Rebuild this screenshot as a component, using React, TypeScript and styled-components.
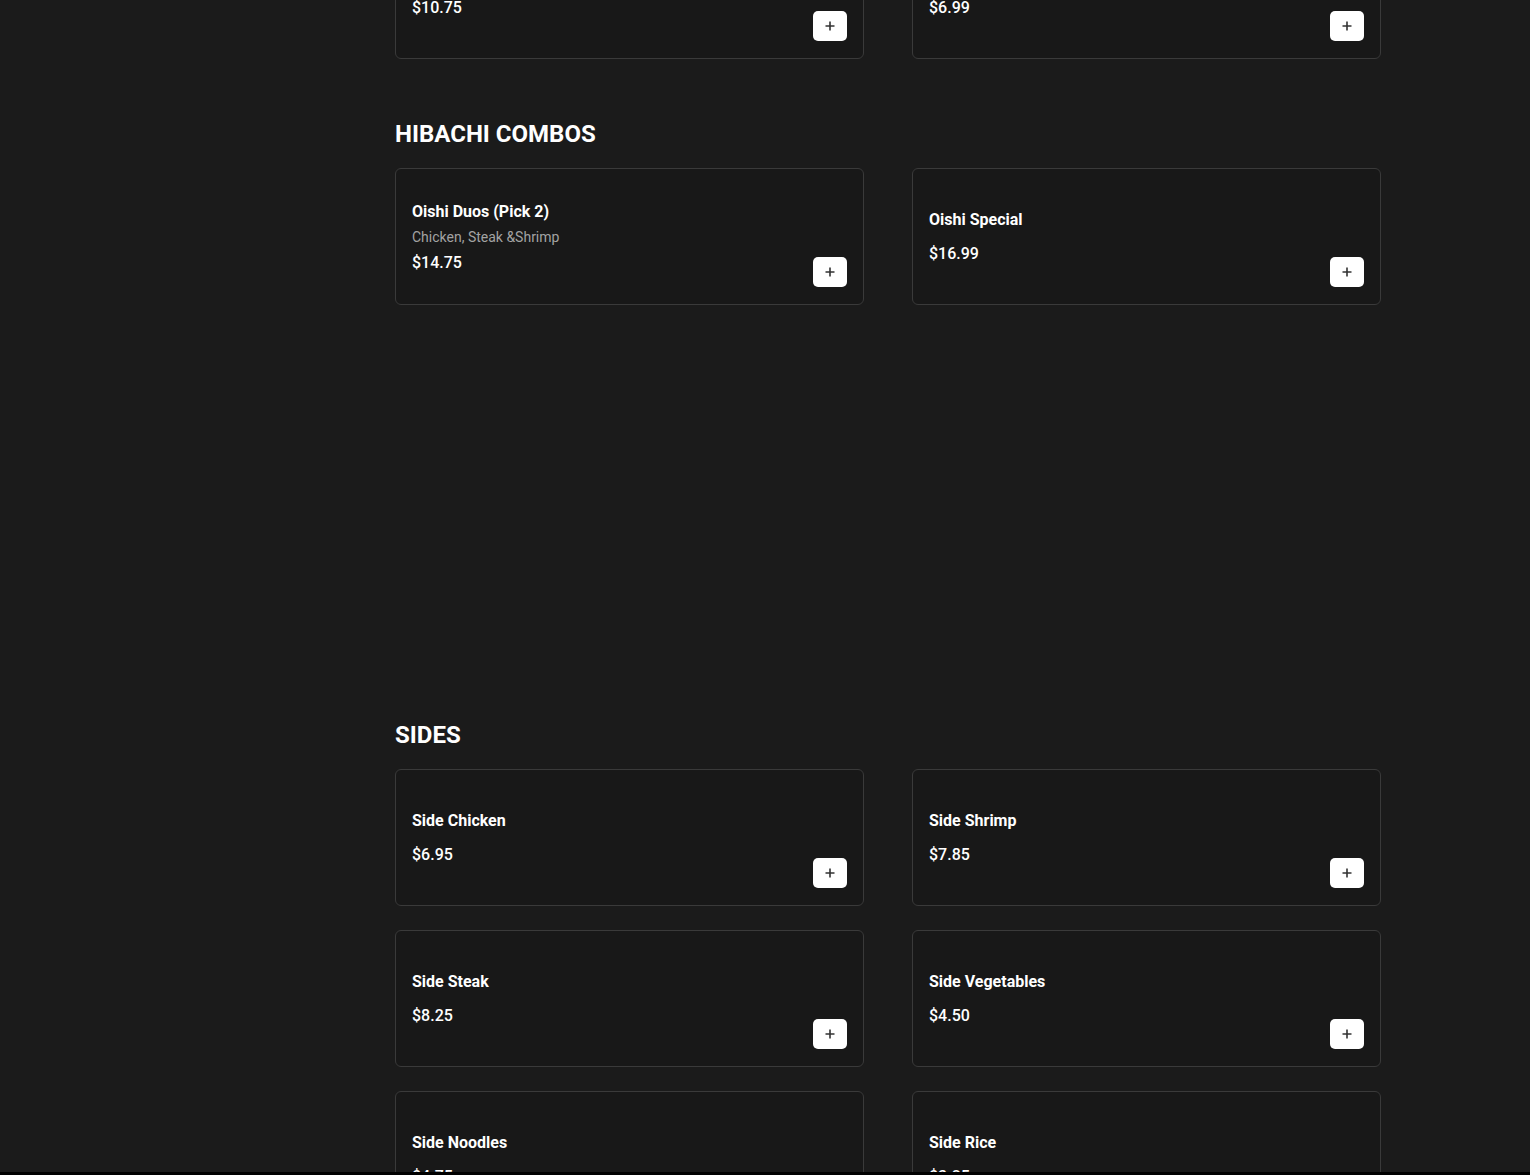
import React from "react";
import styled, { createGlobalStyle } from "styled-components";

const Global = createGlobalStyle`
  html, body { margin: 0; padding: 0; background: #000; }
  body { font-family: Roboto, "Liberation Sans", Arial, sans-serif; color: #fff; }
  * { box-sizing: border-box; }
`;

const Page = styled.div`
  height: 1172px;
  overflow: hidden;
  background: #1b1b1b;
`;

const Menu = styled.main`
  width: 986px;
  margin-left: 395px;
  margin-top: -78px;
  display: flex;
  flex-direction: column;
`;

const Section = styled.section<{ $after: number }>`
  display: flex;
  flex-direction: column;
  margin-bottom: ${(p) => p.$after}px;
`;

const Heading = styled.h2`
  margin: 0 0 19px;
  font-size: 24px;
  line-height: 29px;
  font-weight: 700;
  color: #fff;
`;

const Grid = styled.div`
  display: grid;
  grid-template-columns: 1fr 1fr;
  column-gap: 48px;
  row-gap: 24px;
`;

const Card = styled.article`
  height: 137px;
  background: #181818;
  border: 1px solid #3a3a3a;
  border-radius: 6px;
  padding: 16px;
  display: flex;
  align-items: stretch;
  justify-content: space-between;
`;

const Info = styled.div<{ $hasDesc: boolean }>`
  display: flex;
  flex-direction: column;
  justify-content: center;
  padding-top: ${(p) => (p.$hasDesc ? 2 : 0)}px;
`;

const Name = styled.h3<{ $hasDesc: boolean }>`
  margin: 0 0 ${(p) => (p.$hasDesc ? 3 : 10)}px;
  font-size: 16px;
  line-height: 24px;
  font-weight: 700;
  color: #fff;
`;

const Desc = styled.p`
  margin: 0 0 4px;
  font-size: 14px;
  line-height: 20px;
  color: #a3a3a3;
`;

const Price = styled.div`
  font-size: 16px;
  line-height: 24px;
  font-weight: 500;
  color: #fff;
`;

const AddButton = styled.button`
  align-self: flex-end;
  width: 34px;
  height: 30px;
  margin-bottom: 1px;
  border: none;
  border-radius: 5px;
  background: #fff;
  display: flex;
  align-items: center;
  justify-content: center;
  padding: 0;
  cursor: pointer;
`;

type Item = { name: string; desc?: string; price: string };

const sections: { title?: string; after: number; items: Item[] }[] = [
  {
    after: 61,
    items: [
      { name: "Hibachi Vegetables", price: "$10.75" },
      { name: "Kids Meal", price: "$6.99" },
    ],
  },
  {
    title: "HIBACHI COMBOS",
    after: 416,
    items: [
      { name: "Oishi Duos (Pick 2)", desc: "Chicken, Steak &Shrimp", price: "$14.75" },
      { name: "Oishi Special", price: "$16.99" },
    ],
  },
  {
    title: "SIDES",
    after: 0,
    items: [
      { name: "Side Chicken", price: "$6.95" },
      { name: "Side Shrimp", price: "$7.85" },
      { name: "Side Steak", price: "$8.25" },
      { name: "Side Vegetables", price: "$4.50" },
      { name: "Side Noodles", price: "$4.75" },
      { name: "Side Rice", price: "$3.25" },
    ],
  },
];

const Plus = () => (
  <svg width="10" height="10" viewBox="0 0 10 10" aria-hidden="true">
    <path d="M5 0.5v9M0.5 5h9" stroke="#333" strokeWidth="1.6" strokeLinecap="butt" />
  </svg>
);

export default function App() {
  return (
    <>
      <Global />
      <Page>
        <Menu>
          {sections.map((s, i) => (
            <Section key={i} $after={s.after}>
              {s.title && <Heading>{s.title}</Heading>}
              <Grid>
                {s.items.map((it) => (
                  <Card key={it.name}>
                    <Info $hasDesc={!!it.desc}>
                      <Name $hasDesc={!!it.desc}>{it.name}</Name>
                      {it.desc && <Desc>{it.desc}</Desc>}
                      <Price>{it.price}</Price>
                    </Info>
                    <AddButton aria-label={`Add ${it.name}`}>
                      <Plus />
                    </AddButton>
                  </Card>
                ))}
              </Grid>
            </Section>
          ))}
        </Menu>
      </Page>
    </>
  );
}
